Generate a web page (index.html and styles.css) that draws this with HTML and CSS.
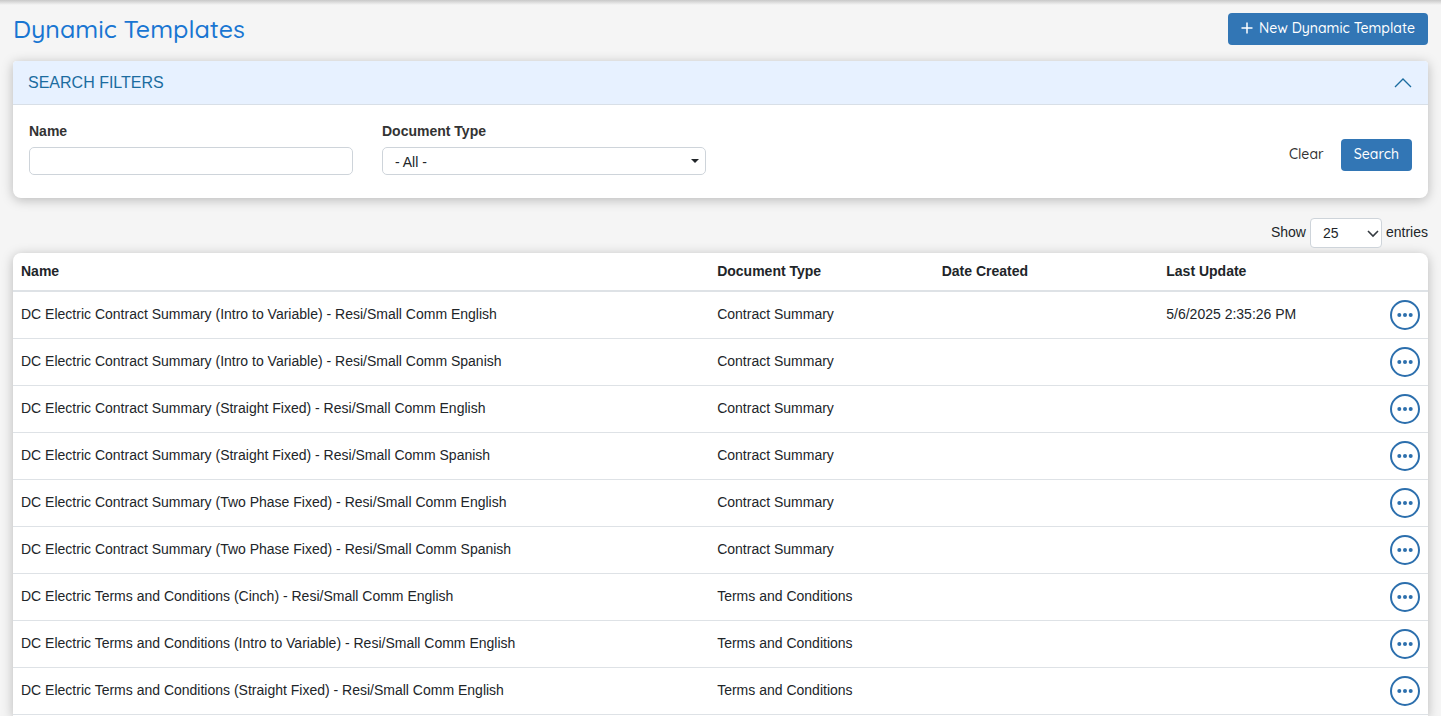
FILE: index.html
```html
<!DOCTYPE html>
<html lang="en">
    <head>
        <meta charset="UTF-8" />
        <meta name="viewport" content="width=device-width, initial-scale=1.0" />
        <title>Dynamic Templates</title>
        <link rel="stylesheet" href="styles.css">
    </head>
    <body>
        <svg class="sprite" aria-hidden="true">
            <symbol id="icon-more" viewBox="0 0 30 30">
                <circle cx="15" cy="15" r="14" fill="none" stroke="currentColor" stroke-width="2" />
                <circle cx="9.3" cy="15" r="2" fill="currentColor" />
                <circle cx="15" cy="15" r="2" fill="currentColor" />
                <circle cx="20.7" cy="15" r="2" fill="currentColor" />
            </symbol>
        </svg>

        <div class="page-header">
            <h1>Dynamic Templates</h1>
            <button class="btn btn-primary" type="button">
                <svg class="icon-plus" viewBox="0 0 12 12"><path d="M6 0.5v11M0.5 6h11" /></svg>
                New Dynamic Template
            </button>
        </div>

        <form class="filters">
            <div class="filters-header">
                <h2>SEARCH FILTERS</h2>
                <button class="collapse-button" type="button" aria-label="Collapse filters">
                    <svg viewBox="0 0 18 10"><path d="M1 9l8-8 8 8" /></svg>
                </button>
            </div>
            <div class="filters-body">
                <div class="field">
                    <label for="name">Name</label>
                    <input class="control" type="text" id="name">
                </div>
                <div class="field">
                    <label for="documentType">Document Type</label>
                    <div class="select-wrap">
                        <select class="control" id="documentType">
                            <option>- All -</option>
                            <option>Contract Summary</option>
                            <option>Terms and Conditions</option>
                        </select>
                        <svg class="caret" viewBox="0 0 8 4"><path d="M0 0h8L4 4z" /></svg>
                    </div>
                </div>
                <div class="filter-actions">
                    <button class="btn btn-link" type="reset">Clear</button>
                    <button class="btn btn-primary" type="button">Search</button>
                </div>
            </div>
        </form>

        <div class="entries">
            <label for="pageSize">Show</label>
            <div class="select-wrap">
                <select class="page-size" id="pageSize">
                    <option>10</option>
                    <option selected>25</option>
                    <option>50</option>
                </select>
                <svg class="chevron" viewBox="0 0 12 8"><path d="M1 1l5 5 5-5" /></svg>
            </div>
            <span>entries</span>
        </div>

        <div class="table-panel">
            <table>
                <colgroup>
                    <col class="col-name">
                    <col class="col-type">
                    <col class="col-date">
                    <col class="col-update">
                    <col class="col-action">
                </colgroup>
                <thead>
                    <tr>
                        <th>Name</th>
                        <th>Document Type</th>
                        <th>Date Created</th>
                        <th>Last Update</th>
                        <th></th>
                    </tr>
                </thead>
                <tbody>
                    <tr>
                        <td>DC Electric Contract Summary (Intro to Variable) - Resi/Small Comm English</td>
                        <td>Contract Summary</td>
                        <td></td>
                        <td>5/6/2025 2:35:26 PM</td>
                        <td><button class="more-button" type="button" aria-label="Actions"><svg><use href="#icon-more" /></svg></button></td>
                    </tr>
                    <tr>
                        <td>DC Electric Contract Summary (Intro to Variable) - Resi/Small Comm Spanish</td>
                        <td>Contract Summary</td>
                        <td></td>
                        <td></td>
                        <td><button class="more-button" type="button" aria-label="Actions"><svg><use href="#icon-more" /></svg></button></td>
                    </tr>
                    <tr>
                        <td>DC Electric Contract Summary (Straight Fixed) - Resi/Small Comm English</td>
                        <td>Contract Summary</td>
                        <td></td>
                        <td></td>
                        <td><button class="more-button" type="button" aria-label="Actions"><svg><use href="#icon-more" /></svg></button></td>
                    </tr>
                    <tr>
                        <td>DC Electric Contract Summary (Straight Fixed) - Resi/Small Comm Spanish</td>
                        <td>Contract Summary</td>
                        <td></td>
                        <td></td>
                        <td><button class="more-button" type="button" aria-label="Actions"><svg><use href="#icon-more" /></svg></button></td>
                    </tr>
                    <tr>
                        <td>DC Electric Contract Summary (Two Phase Fixed) - Resi/Small Comm English</td>
                        <td>Contract Summary</td>
                        <td></td>
                        <td></td>
                        <td><button class="more-button" type="button" aria-label="Actions"><svg><use href="#icon-more" /></svg></button></td>
                    </tr>
                    <tr>
                        <td>DC Electric Contract Summary (Two Phase Fixed) - Resi/Small Comm Spanish</td>
                        <td>Contract Summary</td>
                        <td></td>
                        <td></td>
                        <td><button class="more-button" type="button" aria-label="Actions"><svg><use href="#icon-more" /></svg></button></td>
                    </tr>
                    <tr>
                        <td>DC Electric Terms and Conditions (Cinch) - Resi/Small Comm English</td>
                        <td>Terms and Conditions</td>
                        <td></td>
                        <td></td>
                        <td><button class="more-button" type="button" aria-label="Actions"><svg><use href="#icon-more" /></svg></button></td>
                    </tr>
                    <tr>
                        <td>DC Electric Terms and Conditions (Intro to Variable) - Resi/Small Comm English</td>
                        <td>Terms and Conditions</td>
                        <td></td>
                        <td></td>
                        <td><button class="more-button" type="button" aria-label="Actions"><svg><use href="#icon-more" /></svg></button></td>
                    </tr>
                    <tr>
                        <td>DC Electric Terms and Conditions (Straight Fixed) - Resi/Small Comm English</td>
                        <td>Terms and Conditions</td>
                        <td></td>
                        <td></td>
                        <td><button class="more-button" type="button" aria-label="Actions"><svg><use href="#icon-more" /></svg></button></td>
                    </tr>
                </tbody>
            </table>
        </div>
    </body>
</html>
```
FILE: styles.css
```css
* {
    box-sizing: border-box;
}

body {
    display: flex;
    flex-direction: column;
    min-height: 100vh;
    margin: 0;
    padding: 13px 13px 0;
    background: #f5f5f5 linear-gradient(#c8c8c8, #f5f5f5) no-repeat top / 100% 5px;
    color: #212529;
    font-family: Arial, "Liberation Sans", sans-serif;
    font-size: 14px;
    line-height: 20px;
}

button,
input,
select {
    font: inherit;
    color: inherit;
}

button {
    cursor: pointer;
}

svg {
    display: block;
}

.sprite {
    position: absolute;
    width: 0;
    height: 0;
}

.page-header {
    display: flex;
    justify-content: space-between;
    align-items: center;
    margin-bottom: 16px;
}

h1 {
    margin: 0;
    color: #1976d2;
    font-family: Quicksand, Lato, sans-serif;
    font-size: 25px;
    font-weight: 500;
    line-height: 32px;
}

.btn {
    display: flex;
    align-items: center;
    gap: 6px;
    height: 32px;
    padding: 0 13px 2px;
    border: none;
    border-radius: 4px;
    font-family: Quicksand, Lato, sans-serif;
    font-size: 14px;
    font-weight: 500;
}

.btn-primary {
    background: #3276b5;
    color: #fff;
}

.btn-link {
    background: none;
    color: #333;
}

.icon-plus {
    width: 12px;
    height: 12px;
    fill: none;
    stroke: currentColor;
    stroke-width: 1.5;
}

.filters {
    margin-bottom: 20px;
    overflow: hidden;
    border-radius: 4px 4px 8px 8px;
    background: #fff;
}

.filters,
.table-panel {
    box-shadow: 0 2px 12px rgba(0, 0, 0, 0.25);
}

.filters-header {
    display: flex;
    justify-content: space-between;
    align-items: center;
    height: 44px;
    padding: 0 16px 0 15px;
    border-bottom: 1px solid #d8dfe7;
    background: #e7f1ff;
    color: #1b6ca0;
}

h2 {
    margin: 0;
    font-size: 16px;
    font-weight: 400;
}

.collapse-button {
    padding: 0;
    border: none;
    background: none;
}

.collapse-button svg {
    width: 18px;
    height: 10px;
    fill: none;
    stroke: currentColor;
    stroke-width: 1.3;
}

.filters-body {
    display: grid;
    grid-template-columns: repeat(4, 1fr);
    gap: 29px;
    padding: 16px 16px 23px;
}

.field label {
    display: block;
    margin-bottom: 6px;
    color: #333;
    font-weight: bold;
}

.control {
    display: block;
    width: 100%;
    height: 28px;
    padding: 2px 12px 0;
    border: 1px solid #ced4da;
    border-radius: 5px;
    background: #fff;
}

.select-wrap {
    position: relative;
}

select {
    appearance: none;
}

.caret {
    position: absolute;
    top: 12px;
    right: 7px;
    width: 8px;
    height: 4px;
    fill: #212529;
    pointer-events: none;
}

.filter-actions {
    display: flex;
    grid-column: 4;
    justify-content: flex-end;
    align-items: flex-end;
    gap: 4px;
    padding-bottom: 4px;
}

.entries {
    display: flex;
    justify-content: flex-end;
    gap: 4px;
    margin-bottom: 5px;
    line-height: 28px;
}

.page-size {
    display: block;
    width: 72px;
    height: 30px;
    padding: 0 12px 3px;
    border: 1px solid #ced4da;
    border-radius: 4px;
    background: #fff;
}

.chevron {
    position: absolute;
    top: 12px;
    right: 3px;
    width: 12px;
    height: 8px;
    fill: none;
    stroke: #343a40;
    stroke-width: 1.6;
    pointer-events: none;
}

.table-panel {
    flex: 1;
    border-radius: 8px 8px 0 0;
    background: #fff;
}

table {
    width: 100%;
    border-collapse: separate;
    border-spacing: 0;
    table-layout: fixed;
}

.col-name {
    width: 49.2%;
}

.col-type,
.col-date {
    width: 15.87%;
}

.col-update {
    width: 14%;
}

th {
    padding: 8px 8px 9px;
    border-bottom: 2px solid #dee2e6;
    text-align: left;
}

td {
    padding: 8px;
    border-bottom: 1px solid #dee2e6;
    line-height: 28px;
    vertical-align: top;
}

.more-button {
    display: block;
    margin-left: auto;
    padding: 0;
    border: none;
    background: none;
    color: #2c6fad;
}

.more-button svg {
    width: 30px;
    height: 30px;
}
```
